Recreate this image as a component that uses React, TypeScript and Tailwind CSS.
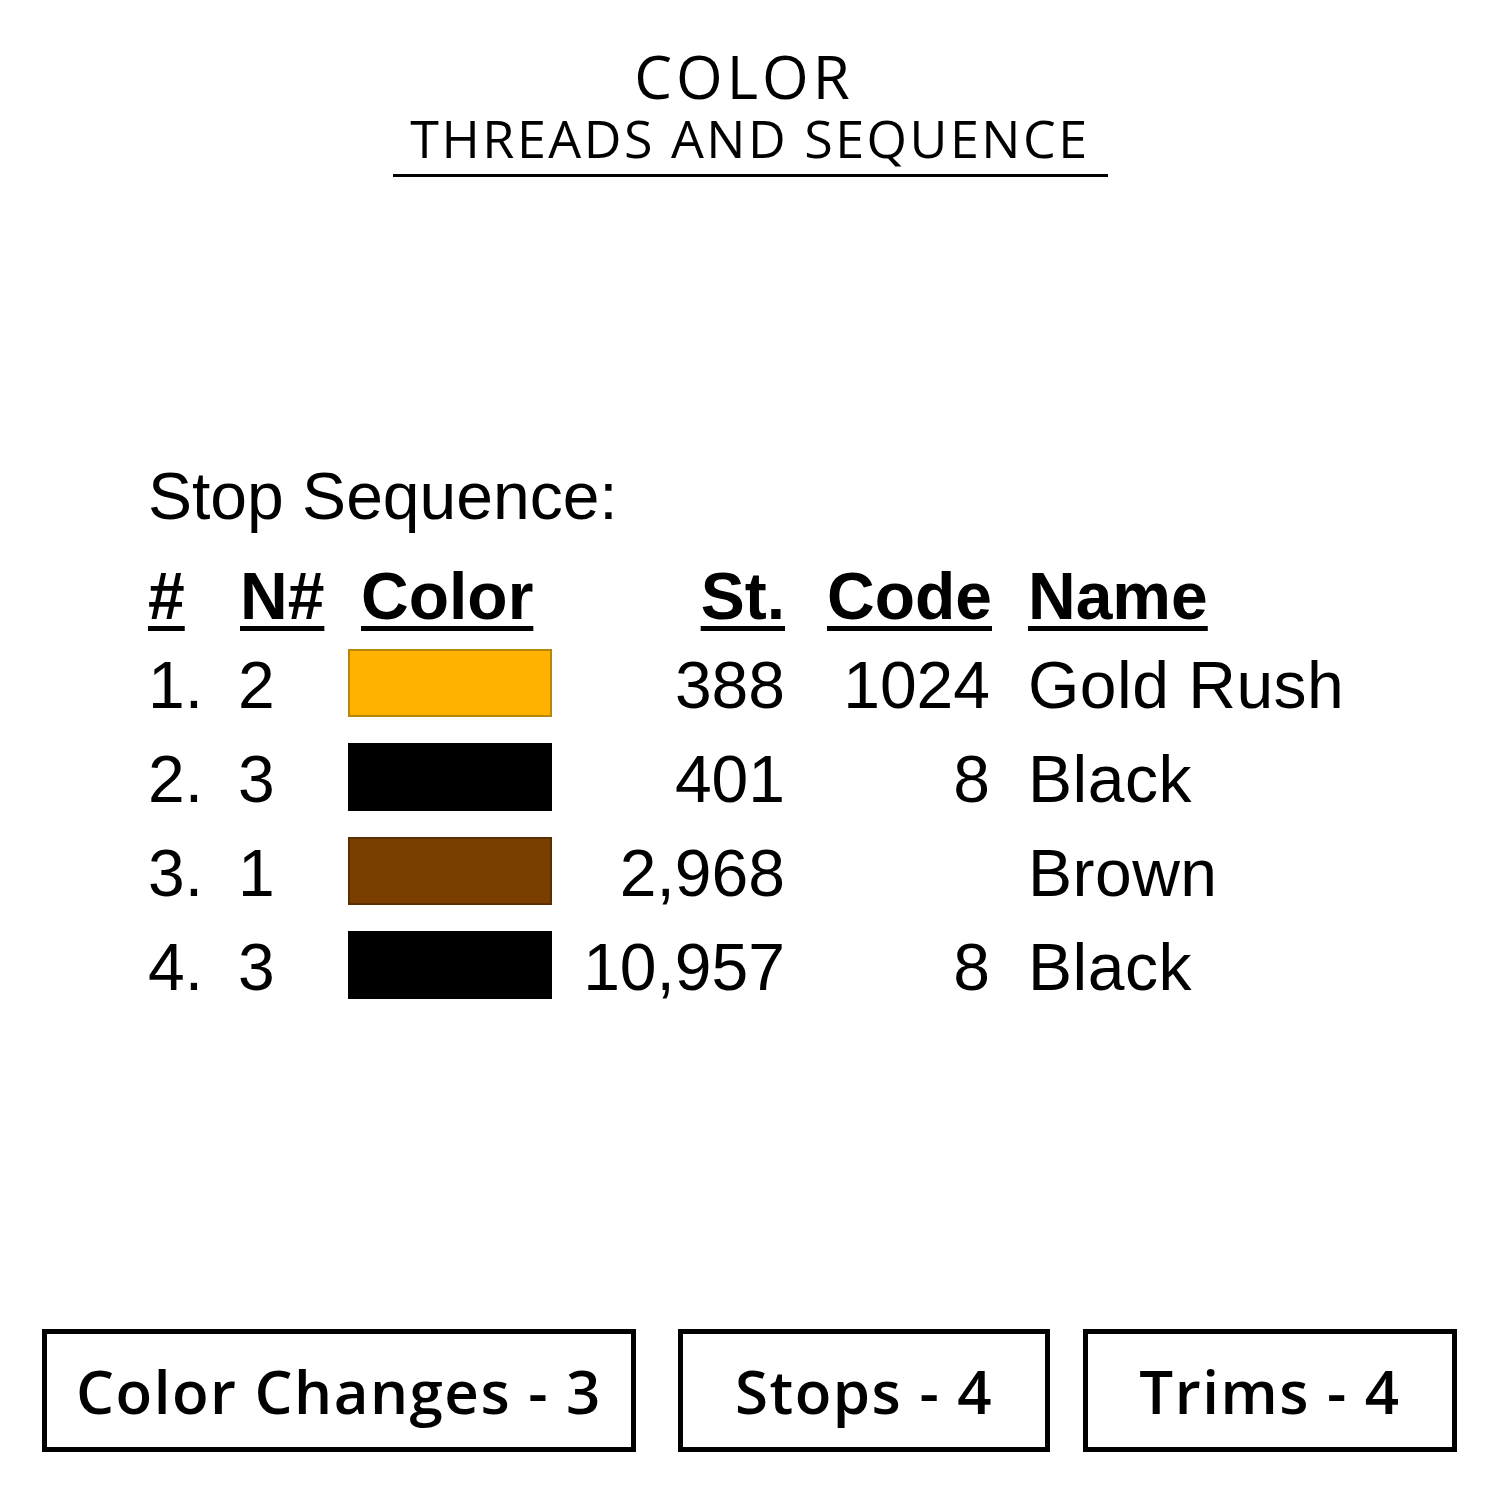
import React from "react";

const rows = [
  { n: "1.", nn: "2", color: "bg-[#ffb300]", border: "border-[#b8860b]", st: "388", code: "1024", name: "Gold Rush" },
  { n: "2.", nn: "3", color: "bg-black", border: "border-black", st: "401", code: "8", name: "Black" },
  { n: "3.", nn: "1", color: "bg-[#7a3f00]", border: "border-[#5a2e00]", st: "2,968", code: "", name: "Brown" },
  { n: "4.", nn: "3", color: "bg-black", border: "border-black", st: "10,957", code: "8", name: "Black" },
];

const head = "font-bold underline decoration-[5px] underline-offset-[7px]";

export default function App() {
  return (
    <div className="w-[1500px] h-[1500px] bg-white text-black flex flex-col overflow-hidden">
      {/* Title */}
      <div className="flex flex-col items-center pt-[46px]" style={{ fontFamily: "'Open Sans', sans-serif" }}>
        <div className="text-[60px] leading-[60px] font-medium tracking-[4px] mr-[12px]">COLOR</div>
        <div className="text-[52px] leading-[52px] font-normal tracking-[2.5px] mt-[6px]">THREADS AND SEQUENCE</div>
        <div className="w-[715px] h-[3px] bg-black mt-[10px] ml-[1px]" />
      </div>

      {/* Table */}
      <div className="ml-[148px] mt-[286px] text-[66px] leading-[66px]" style={{ fontFamily: "'Liberation Sans', Arial, sans-serif" }}>
        <div>Stop Sequence:</div>
        <div className="grid grid-cols-[90px_110px_204px_235px_205px_1fr] mt-[34px] h-[73px]">
          <div className={head}>#</div>
          <div className={`${head} pl-[2px]`}><span>N#</span></div>
          <div className="pl-[13px]"><span className={head}>Color</span></div>
          <div className="text-right pr-[2px]"><span className={head}>St.</span></div>
          <div className="text-right"><span className={head}>Code</span></div>
          <div className="pl-[36px]"><span className={head}>Name</span></div>
        </div>
        {rows.map((r, i) => (
          <div key={i} className="grid grid-cols-[90px_110px_204px_235px_205px_1fr] h-[94px] items-center">
            <div className="pt-[4px]">{r.n}</div>
            <div className="pt-[4px]">{r.nn}</div>
            <div className={`h-[68px] ${r.color} border-2 ${r.border}`} />
            <div className="text-right pr-[2px] pt-[4px]">{r.st}</div>
            <div className="text-right pr-[2px] pt-[4px]">{r.code}</div>
            <div className="pl-[36px] pt-[4px] whitespace-nowrap tracking-[0.5px]">{r.name}</div>
          </div>
        ))}
      </div>

      {/* Boxes */}
      <div className="mt-auto mb-[48px] flex h-[123px]" style={{ fontFamily: "'Open Sans', sans-serif" }}>
        <div className="ml-[42px] w-[594px] border-[5px] border-black flex items-center justify-center text-[60px] font-semibold tracking-[1.5px]">Color Changes - 3</div>
        <div className="ml-[42px] w-[372px] border-[5px] border-black flex items-center justify-center text-[60px] font-semibold tracking-[1.5px]">Stops - 4</div>
        <div className="ml-[33px] w-[374px] border-[5px] border-black flex items-center justify-center text-[60px] font-semibold tracking-[1.5px]">Trims - 4</div>
      </div>
    </div>
  );
}
